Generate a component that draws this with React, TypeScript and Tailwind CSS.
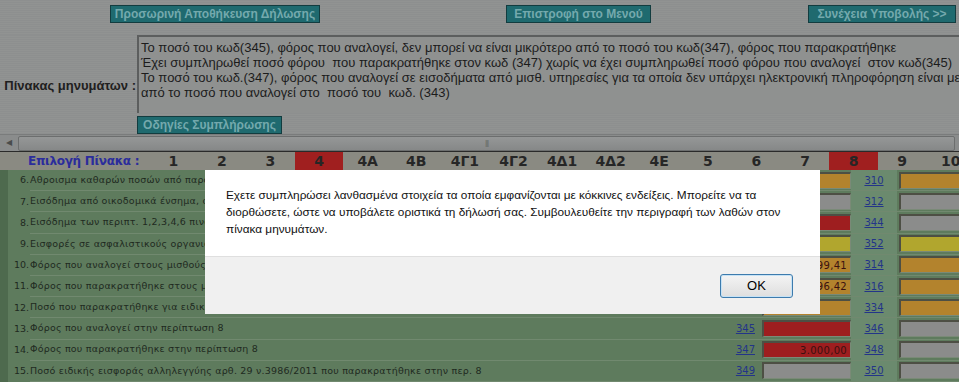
import React from 'react';

const tabs = ['1', '2', '3', '4', '4A', '4B', '4Γ1', '4Γ2', '4Δ1', '4Δ2', '4E', '5', '6', '7', '8', '9', '10'];
const errorTabs = ['4', '8'];

const fill: Record<string, string> = {
  orange: 'bg-[#b3832d]',
  gray: 'bg-[#8b8c8b]',
  red: 'bg-[#9e1e1f]',
  yellow: 'bg-[#b1a62e]',
};

const rows = [
  { n: '6.', t: 'Αθροισμα καθαρών ποσών από παροχή μισθωτών υπηρεσιών', c1: '309', f1: 'orange', v1: '', c2: '310', f2: 'orange' },
  { n: '7.', t: 'Εισόδημα από οικοδομικά ένσημα, αμοιβές ημερομισθίων', c1: '311', f1: 'gray', v1: '', c2: '312', f2: 'gray' },
  { n: '8.', t: 'Εισόδημα των περιπτ. 1,2,3,4,6 πινάκων της παρ. 1', c1: '343', f1: 'red', v1: '', c2: '344', f2: 'gray' },
  { n: '9.', t: 'Εισφορές σε ασφαλιστικούς οργανισμούς κύριας ασφάλισης', c1: '351', f1: 'yellow', v1: '', c2: '352', f2: 'yellow' },
  { n: '10.', t: 'Φόρος που αναλογεί στους μισθούς, συντάξεις κλπ.', c1: '313', f1: 'orange', v1: '1.399,41', c2: '314', f2: 'orange' },
  { n: '11.', t: 'Φόρος που παρακρατήθηκε στους μισθούς, συντάξεις κλπ.', c1: '315', f1: 'orange', v1: '1.396,42', c2: '316', f2: 'orange' },
  { n: '12.', t: 'Ποσό που παρακρατήθηκε για ειδική εισφορά αλληλεγγύης', c1: '333', f1: 'orange', v1: '', c2: '334', f2: 'orange' },
  { n: '13.', t: 'Φόρος που αναλογεί στην περίπτωση 8', c1: '345', f1: 'red', v1: '', c2: '346', f2: 'gray' },
  { n: '14.', t: 'Φόρος που παρακρατήθηκε στην περίπτωση 8', c1: '347', f1: 'red', v1: '3.000,00', c2: '348', f2: 'gray' },
  { n: '15.', t: 'Ποσό ειδικής εισφοράς αλληλεγγύης αρθ. 29 ν.3986/2011 που παρακρατήθηκε στην περ. 8', c1: '349', f1: 'gray', v1: '', c2: '350', f2: 'gray' },
];

const messages = [
  'Το ποσό του κωδ(345), φόρος που αναλογεί, δεν μπορεί να είναι μικρότερο από το ποσό του κωδ(347), φόρος που παρακρατήθηκε',
  'Έχει συμπληρωθεί ποσό φόρου  που παρακρατήθηκε στον κωδ (347) χωρίς να έχει συμπληρωθεί ποσό φόρου που αναλογεί  στον κωδ(345)',
  'Το ποσό του κωδ.(347), φόρος που αναλογεί σε εισοδήματα από μισθ. υπηρεσίες για τα οποία δεν υπάρχει ηλεκτρονική πληροφόρηση είναι μεγαλύτερο',
  'από το ποσό που αναλογεί στο  ποσό του  κωδ. (343)',
];

function TealButton({ label, className = '' }: { label: string; className?: string }) {
  return (
    <div
      className={`h-[18px] flex items-center justify-center bg-[#1f6a6f] border border-[#123c3f] text-[#74a9ad] text-[12px] font-bold whitespace-nowrap ${className}`}
    >
      {label}
    </div>
  );
}

function Field({ color, value }: { color: string; value?: string }) {
  return (
    <div
      className={`h-[17px] border-t-2 border-l-2 border-t-[#4d4f44] border-l-[#4d4f44] border-b border-r border-b-[#7a8a77] border-r-[#7a8a77] ${fill[color]} flex items-center justify-end pr-[3px] text-[10px] text-[#3a1010] tracking-[0.3px]`}
    >
      {value}
    </div>
  );
}

export default function App() {
  return (
    <div className="relative w-[959px] h-[382px] overflow-hidden bg-[#8e908f] font-['Liberation_Sans',Arial,sans-serif]">
      {/* top action buttons */}
      <div className="h-[35px] flex pt-[5px] bg-[repeating-linear-gradient(0deg,#8d8f8f_0px,#8d8f8f_1px,#919392_1px,#919392_2px)]">
        <TealButton label="Προσωρινή Αποθήκευση Δήλωσης" className="ml-[110px] w-[210px]" />
        <TealButton label="Επιστροφή στο Μενού" className="ml-[186px] w-[145px]" />
        <TealButton label="Συνέχεια Υποβολής >>" className="ml-[157px] w-[148px]" />
      </div>

      {/* message panel */}
      <div className="h-[99px] flex overflow-hidden bg-[repeating-linear-gradient(0deg,#8d8f8f_0px,#8d8f8f_1px,#919392_1px,#919392_2px)]">
        <div className="w-[137px] shrink-0 flex items-center justify-end pr-[1px] pt-[2px] text-[13px] font-bold text-[#1f2020] whitespace-nowrap">
          Πίνακας μηνυμάτων :
        </div>
        <div className="flex-1 flex flex-col">
          <div className="h-[84px] border-t-2 border-l-2 border-[#5c5e5e] bg-[#8f9190] pl-[2px] pt-[3px] text-[13px] leading-[15px] text-[#1c1c1c] whitespace-pre overflow-hidden">
            {messages.map((m) => (
              <div key={m}>{m}</div>
            ))}
          </div>
          <TealButton label="Οδηγίες Συμπλήρωσης" className="mt-[3px] w-[145px]" />
        </div>
      </div>

      {/* horizontal scrollbar */}
      <div className="h-[17px] flex items-center bg-[#8a8c8c] border-t border-[#7a7c7c]">
        <div className="w-[18px] flex justify-center text-[8px] text-[#4a4c4c]">◀</div>
        <div className="flex-1 mr-[4px] h-[15px] border border-[#6c6e6e] rounded-[2px] bg-[linear-gradient(#959797,#868888)] flex items-center justify-center">
          <span className="text-[8px] text-[#666] tracking-[-1px]">|||</span>
        </div>
      </div>

      {/* tab selector */}
      <div className="h-[19px] flex items-stretch border-t border-[#2a2a2a] bg-[#8a8a82] font-['DejaVu_Sans',Verdana,sans-serif] font-bold">
        <div className="w-[149px] shrink-0 pl-[28px] flex items-center text-[12px] text-[#2b2c9c] whitespace-nowrap tracking-[-0.3px]">
          Επιλογή Πίνακα :
        </div>
        {tabs.map((t) => (
          <div
            key={t}
            className={`w-[48.6px] shrink-0 flex items-center justify-center text-[14px] text-[#262626] ${
              errorTabs.includes(t) ? 'bg-[#a01f1f]' : ''
            }`}
          >
            {t}
          </div>
        ))}
      </div>

      {/* form rows */}
      <div className="flex bg-[#5e7b5d] font-['DejaVu_Sans',Verdana,sans-serif]">
        <div className="w-[8px] shrink-0 bg-[#4e6a4e]" />
        <div className="flex-1">
          {rows.map((r) => (
            <div key={r.n} className="h-[21.2px] flex items-center">
              <div className="w-[22px] shrink-0 self-stretch flex items-center justify-end text-[9.5px] text-[#1f2a1f] pr-[1px]">
                {r.n}
              </div>
              <div className="flex-1 self-stretch flex items-center border-b border-[#71896f]">
                <div className="w-[680px] shrink-0 text-[9.5px] text-[#1f2a1f] whitespace-nowrap overflow-hidden tracking-[0.2px]">
                  {r.t}
                </div>
                <div className="w-[47px] shrink-0 text-right pr-[2px] text-[10px] text-[#233489] underline">{r.c1}</div>
                <div className="w-[89px] shrink-0 ml-[5px]">
                  <Field color={r.f1} value={r.v1} />
                </div>
                <div className="w-[46px] shrink-0 self-stretch flex items-center justify-center bg-[#6b8a6e] text-[10px] text-[#233489] underline">
                  {r.c2}
                </div>
                <div className="w-[70px] shrink-0 ml-[2px]">
                  <Field color={r.f2} />
                </div>
              </div>
            </div>
          ))}
        </div>
      </div>

      {/* alert dialog */}
      <div className="absolute left-[205px] top-[170px] w-[615px] h-[144px] flex flex-col bg-white">
        <div className="h-[86px] pl-[21px] pt-[17px] text-[11.8px] leading-[17px] text-[#111]">
          Εχετε συμπληρώσει λανθασμένα στοιχεία τα οποία εμφανίζονται με κόκκινες ενδείξεις. Μπορείτε να τα
          <br />
          διορθώσετε, ώστε να υποβάλετε οριστικά τη δήλωσή σας. Συμβουλευθείτε την περιγραφή των λαθών στον
          <br />
          πίνακα μηνυμάτων.
        </div>
        <div className="flex-1 bg-[#f0f0f0] border-t border-[#dfdfdf] flex items-center justify-end pr-[27px]">
          <button className="w-[73px] h-[24px] rounded-[3px] border border-[#3d7bad] bg-[linear-gradient(#f4f4f4,#dedede)] text-[13px] text-black shadow-[inset_0_0_0_1px_#c6e2f5]">
            OK
          </button>
        </div>
      </div>
    </div>
  );
}
